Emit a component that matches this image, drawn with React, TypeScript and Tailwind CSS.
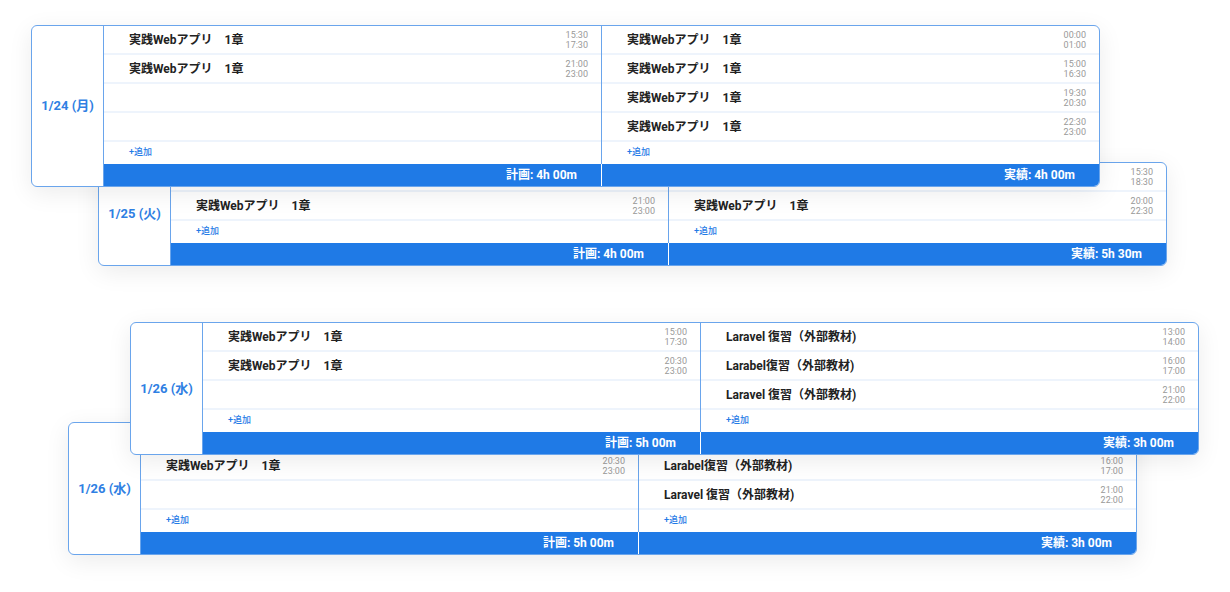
import React from "react";

type Row = { t?: string; a?: string; b?: string };
type C = { x: number; y: number; date: string; rows: number; left: Row[]; right: Row[]; plan: string; act: string };

function Column({ rows, n, label, right }: { rows: Row[]; n: number; label: string; right?: boolean }) {
  const all = [...rows];
  while (all.length < n) all.push({});
  return (
    <div className={`flex-1 flex flex-col ${right ? "border-l border-[#6aa5ec]" : ""}`}>
      {all.map((r, i) => (
        <div key={i} className="h-[29px] border-b-2 border-[#eef4fc] flex items-center justify-between pl-[25px] pr-[13px]">
          <span className="text-[12px] font-bold text-[#222]">{r.t}</span>
          {r.a && (
            <span className="text-[9px] leading-[10px] text-[#999] text-right">
              {r.a}
              <br />
              {r.b}
            </span>
          )}
        </div>
      ))}
      <div className="h-[22px] flex items-center pl-[25px] text-[9px] text-[#1f7ae6] font-medium">+追加</div>
      <div className={`h-[22px] bg-[#1f7ae6] flex items-center justify-end pr-[24px] text-white text-[12px] font-bold ${right ? "-ml-px border-l border-white" : ""}`}>
        {label}
      </div>
    </div>
  );
}

function Card({ c }: { c: C }) {
  return (
    <div
      className="absolute w-[1069px] bg-white border border-[#6aa5ec] rounded-[6px] overflow-hidden flex shadow-[0_6px_24px_rgba(0,0,0,0.08)]"
      style={{ left: c.x, top: c.y }}
    >
      <div className="w-[72px] shrink-0 border-r border-[#6aa5ec] flex items-center justify-center text-[13px] font-bold text-[#2f80e3]">
        {c.date}
      </div>
      <Column rows={c.left} n={c.rows} label={c.plan} />
      <Column rows={c.right} n={c.rows} label={c.act} right />
    </div>
  );
}

const W = "実践Webアプリ　1章";
const cards: C[] = [
  { x: 98, y: 162, date: "1/25 (火)", rows: 2, left: [{ t: W, a: "15:30", b: "17:30" }, { t: W, a: "21:00", b: "23:00" }], right: [{ t: W, a: "15:30", b: "18:30" }, { t: W, a: "20:00", b: "22:30" }], plan: "計画: 4h 00m", act: "実績: 5h 30m" },
  { x: 31, y: 25, date: "1/24 (月)", rows: 4, left: [{ t: W, a: "15:30", b: "17:30" }, { t: W, a: "21:00", b: "23:00" }], right: [{ t: W, a: "00:00", b: "01:00" }, { t: W, a: "15:00", b: "16:30" }, { t: W, a: "19:30", b: "20:30" }, { t: W, a: "22:30", b: "23:00" }], plan: "計画: 4h 00m", act: "実績: 4h 00m" },
  { x: 68, y: 422, date: "1/26 (水)", rows: 3, left: [{ t: W, a: "15:00", b: "17:30" }, { t: W, a: "20:30", b: "23:00" }], right: [{ t: "Laravel 復習（外部教材)", a: "13:00", b: "14:00" }, { t: "Larabel復習（外部教材)", a: "16:00", b: "17:00" }, { t: "Laravel 復習（外部教材)", a: "21:00", b: "22:00" }], plan: "計画: 5h 00m", act: "実績: 3h 00m" },
  { x: 130, y: 322, date: "1/26 (水)", rows: 3, left: [{ t: W, a: "15:00", b: "17:30" }, { t: W, a: "20:30", b: "23:00" }], right: [{ t: "Laravel 復習（外部教材)", a: "13:00", b: "14:00" }, { t: "Larabel復習（外部教材)", a: "16:00", b: "17:00" }, { t: "Laravel 復習（外部教材)", a: "21:00", b: "22:00" }], plan: "計画: 5h 00m", act: "実績: 3h 00m" },
];

export default function App() {
  return (
    <div className="relative w-[1230px] h-[592px] bg-white overflow-hidden" style={{ fontFamily: "Roboto, 'Noto Sans CJK JP', sans-serif" }}>
      {cards.map((c, i) => (
        <Card key={i} c={c} />
      ))}
    </div>
  );
}
